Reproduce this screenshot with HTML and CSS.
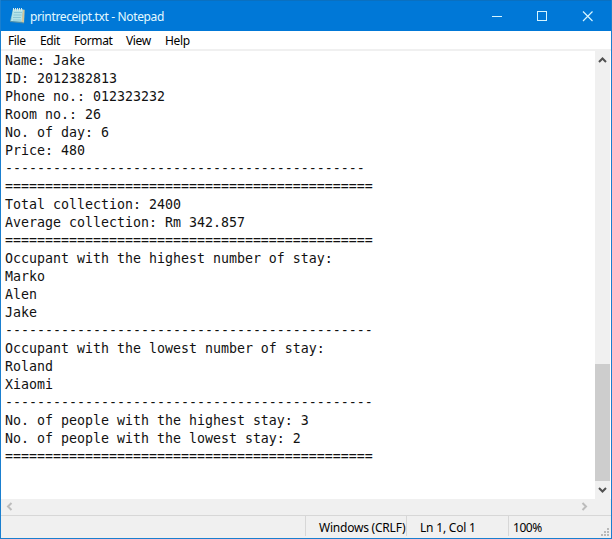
FILE: index.html
```html
<!DOCTYPE html>
<html lang="en">
<head>
<meta charset="utf-8">
<title>printreceipt.txt - Notepad</title>
<link rel="stylesheet" href="styles.css">
</head>
<body>
<div class="window">
  <header class="titlebar">
    <svg class="app-icon" width="18" height="18" viewBox="0 0 18 18">
      <path d="M4 2 L15.500 2.500 L15 16 L1 14.500 Z" fill="#72b4c6"/>
      <path d="M4 2.500 L14 2.500 L13 14.500 L2 14 Z" fill="#b5e3e8"/>
      <path d="M14 3 L15.500 3 L15 16 L12.500 15 Z" fill="#d1c69c"/>
      <path d="M5 5.500H13 M4.500 8H12.500 M4 10.500H12 M4 13H12" stroke="#83bfcf" stroke-width=".8"/>
      <path d="M4.500 1V4 M6.500 1V4 M8.500 1V4 M10.500 1V4 M12.500 1V4" stroke="#d8ebe9" stroke-width="1"/>
      <path d="M1 14.500 L15 16" stroke="#4e8daa" stroke-width="1"/>
    </svg>
    <span class="title">printreceipt.txt - Notepad</span>
    <svg class="controls" width="137" height="31" viewBox="0 0 137 31" fill="none" stroke="#d5f5ff">
      <path d="M18 15.500H28" shape-rendering="crispEdges"/>
      <rect x="63.500" y="10.500" width="9" height="9" shape-rendering="crispEdges"/>
      <path d="M109 10.500L118.500 20M118.500 10.500L109 20" stroke-width="1.200"/>
    </svg>
  </header>
  <nav class="menu">
    <span class="m-file">File</span><span class="m-edit">Edit</span><span class="m-format">Format</span><span class="m-view">View</span><span class="m-help">Help</span>
  </nav>
  <main class="editor">
<pre class="text">Name: Jake
ID: 2012382813
Phone no.: 012323232
Room no.: 26
No. of day: 6
Price: 480
---------------------------------------------
==============================================
Total collection: 2400
Average collection: Rm 342.857
==============================================
Occupant with the highest number of stay:
Marko
Alen
Jake
----------------------------------------------
Occupant with the lowest number of stay:
Roland
Xiaomi
----------------------------------------------
No. of people with the highest stay: 3
No. of people with the lowest stay: 2
==============================================</pre>
    <div class="vscroll">
      <svg width="15" height="17" viewBox="0 0 15 17"><path d="M4 11L7.500 7.500L11 11" fill="none" stroke="#505050" stroke-width="2"/></svg>
      <div class="thumb"></div>
      <svg width="15" height="18" viewBox="0 0 15 18"><path d="M4 7L7.500 10.500L11 7" fill="none" stroke="#505050" stroke-width="2"/></svg>
    </div>
  </main>
  <div class="hscroll">
    <svg width="16" height="16" viewBox="0 0 16 16"><path d="M10.500 4L7 7.500L10.500 11" fill="none" stroke="#bcbcbc" stroke-width="2"/></svg>
    <svg width="16" height="16" viewBox="0 0 16 16"><path d="M4.500 4L8 7.500L4.500 11" fill="none" stroke="#bcbcbc" stroke-width="2"/></svg>
  </div>
  <footer class="status">
    <span class="cell blank"></span>
    <span class="cell encoding"><span>Windows (CRLF)</span></span>
    <span class="cell position"><span>Ln 1, Col 1</span></span>
    <span class="cell zoom"><span>100%</span></span>
    <svg class="grip" width="10" height="10" viewBox="0 0 10 10" fill="#b9b9b9" shape-rendering="crispEdges"><path d="M6 0h2v2h-2zM3 3h2v2h-2zM6 3h2v2h-2zM0 6h2v2h-2zM3 6h2v2h-2zM6 6h2v2h-2z"/></svg>
  </footer>
</div>
</body>
</html>
```
FILE: styles.css
```css
* { box-sizing: border-box; }
body { margin: 0; overflow: hidden; }
svg { display: block; flex: none; }
.window {
  width: 612px;
  height: 539px;
  display: flex;
  flex-direction: column;
  border: 1px solid #1a7fcf;
  border-top: 0;
  background: #fff;
  font: 12px/16px "Noto Sans", "Open Sans", sans-serif;
  color: #000;
}
.titlebar {
  height: 31px;
  flex: none;
  display: flex;
  align-items: center;
  background: #0078d7;
  border-top: 1px solid #0a70c0;
  color: #e4faff;
}
.app-icon { margin-left: 8px; }
.title { margin-left: 3px; padding-top: 1px; letter-spacing: -0.36px; white-space: nowrap; }
.controls { margin-left: auto; }
.menu {
  height: 20px;
  flex: none;
  display: grid;
  grid-template-columns: 32px 34px 52px 39px 1fr;
  padding-left: 7px;
  line-height: 20px;
  letter-spacing: -0.36px;
  border-bottom: 2px solid #f0f0f0;
}
.editor { height: 448px; flex: none; display: flex; }
.text {
  flex: 1;
  margin: 0;
  padding: 1px 0 0 4px;
  font: 13.290px/18px "DejaVu Sans Mono", monospace;
  color: #111;
  overflow: hidden;
}
.vscroll {
  width: 15px;
  margin-right: 1px;
  display: flex;
  flex-direction: column;
  background: #f0f0f0;
}
.thumb { height: 117px; margin-top: auto; background: #cdcdcd; }
.hscroll {
  height: 16px;
  flex: none;
  display: flex;
  justify-content: space-between;
  padding-right: 17px;
  background: #f0f0f0;
}
.status {
  position: relative;
  height: 23px;
  flex: none;
  display: grid;
  grid-template-columns: 305px 101px 102px 1fr;
  background: #f0f0f0;
  border-top: 1px solid #d7d7d7;
  line-height: 24px;
  white-space: nowrap;
}
.cell { height: 20px; border-right: 1px solid #d7d7d7; }
.encoding { padding-left: 13px; letter-spacing: -0.22px; }
.position { padding-left: 13px; letter-spacing: -0.2px; }
.zoom { padding-left: 4px; border: 0; letter-spacing: -0.45px; }
.grip { position: absolute; right: 0; bottom: 0; }
```
